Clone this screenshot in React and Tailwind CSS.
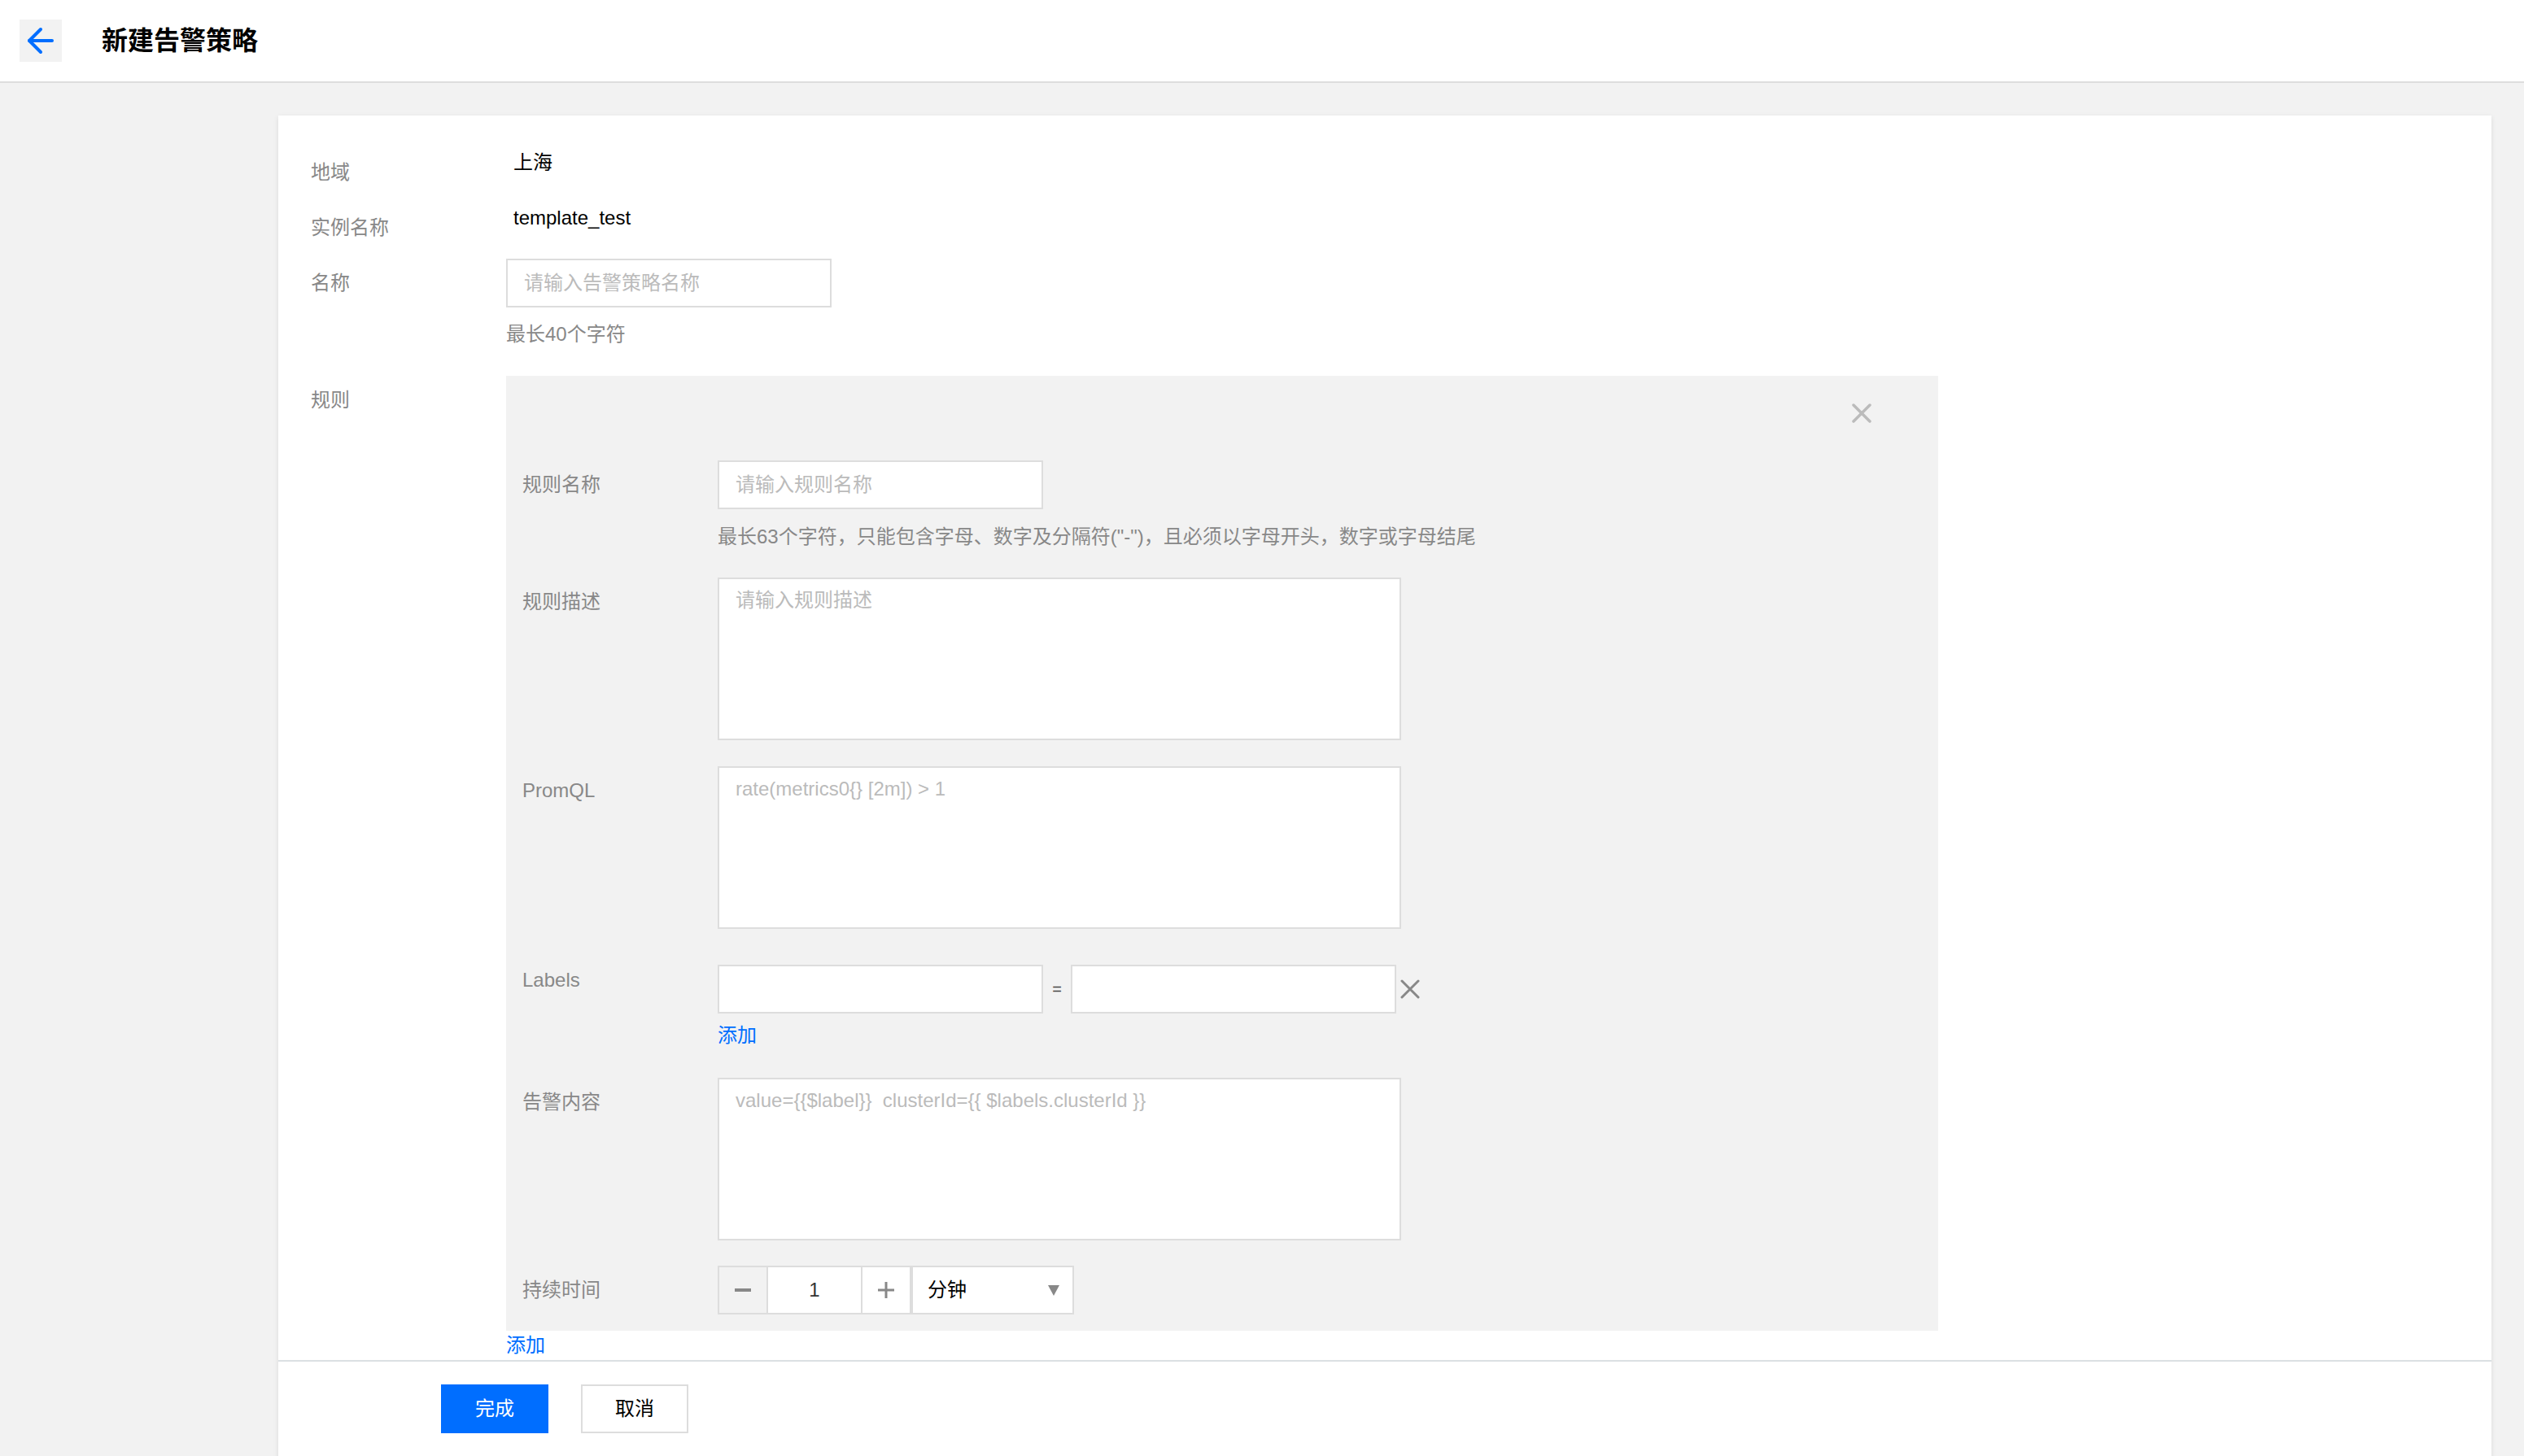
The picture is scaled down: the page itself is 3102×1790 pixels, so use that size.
import { ArrowLeft } from "lucide-react";

function CloseIcon({ className, width = "3" }) {
  return (
    <svg viewBox="0 0 24 24" className={className} fill="none" stroke="currentColor" strokeWidth={width} strokeLinecap="round">
      <path d="M2 2 22 22M22 2 2 22" />
    </svg>
  );
}

function Row({ label, labelClass = "pt-[18px]", children }) {
  return (
    <div className="flex">
      <div className={`w-[240px] shrink-0 leading-[24px] text-[#888] ${labelClass}`}>{label}</div>
      <div className="flex-1">{children}</div>
    </div>
  );
}

function TextArea({ placeholder }) {
  return (
    <textarea
      className="block w-[840px] h-[200px] resize-none border-2 border-[#ddd] bg-white px-[20px] pt-[8px] leading-[36px] text-[24px] outline-none placeholder:text-[#bbb]"
      placeholder={placeholder}
    />
  );
}

function App() {
  return (
    <div className="min-h-screen bg-[#f2f2f2] font-['Liberation_Sans','Noto_Sans_CJK_SC',sans-serif] text-[24px] text-black">
      {/* top bar */}
      <div className="flex h-[102px] items-center border-b-2 border-[#ddd] bg-white pl-[24px]">
        <div className="flex h-[52px] w-[52px] items-center justify-center bg-[#f2f2f2]">
          <ArrowLeft size={48} strokeWidth={2} color="#006eff" />
        </div>
        <span className="ml-[49px] text-[32px] font-bold">新建告警策略</span>
      </div>

      <div className="ml-[342px] mr-[40px] mt-[40px] bg-white shadow-[0_2px_6px_rgba(0,0,0,0.1)]">
        <div className="flex flex-col pl-[40px] pt-[40px]">
          <Row label="地域">
            <div className="h-[60px] pl-[9px] leading-[36px]">上海</div>
          </Row>
          <div className="mt-[8px]">
            <Row label="实例名称">
              <div className="h-[60px] pl-[9px] leading-[36px]">template_test</div>
            </Row>
          </div>
          <div className="mt-[8px]">
            <Row label="名称">
              <input
                className="block h-[60px] w-[400px] border-2 border-[#ddd] px-[20px] outline-none placeholder:text-[#bbb]"
                placeholder="请输入告警策略名称"
              />
              <div className="mt-[15px] leading-[36px] text-[#888]">最长40个字符</div>
            </Row>
          </div>
          <div className="mt-[33px]">
            <Row label="规则">
              <div className="w-[1760px] bg-[#f2f2f2] pb-[20px] pl-[20px]">
                <div className="flex h-[104px] justify-end pr-[82px] pt-[34px]">
                  <CloseIcon className="h-[24px] w-[24px] text-[#bbb]" width="3.5" />
                </div>

                <Row label="规则名称">
                  <input
                    className="block h-[60px] w-[400px] border-2 border-[#ddd] bg-white px-[20px] outline-none placeholder:text-[#bbb]"
                    placeholder="请输入规则名称"
                  />
                  <div className="mt-[16px] leading-[36px] text-[#888]">
                    最长63个字符，只能包含字母、数字及分隔符("-")，且必须以字母开头，数字或字母结尾
                  </div>
                </Row>

                <div className="mt-[32px]">
                  <Row label="规则描述">
                    <TextArea placeholder="请输入规则描述" />
                  </Row>
                </div>

                <div className="mt-[32px]">
                  <Row label="PromQL">
                    <TextArea placeholder="rate(metrics0{} [2m]) > 1" />
                  </Row>
                </div>

                <div className="mt-[44px]">
                  <Row label="Labels" labelClass="pt-[7px]">
                    <div className="flex items-center">
                      <input className="block h-[60px] w-[400px] border-2 border-[#ddd] bg-white px-[20px] outline-none" />
                      <span className="w-[34px] text-center text-[20px] text-[#444]">=</span>
                      <input className="block h-[60px] w-[400px] border-2 border-[#ddd] bg-white px-[20px] outline-none" />
                      <CloseIcon className="ml-[5px] h-[24px] w-[24px] text-[#888]" />
                    </div>
                    <div className="mt-[9px] leading-[36px] text-[#006eff]">添加</div>
                  </Row>
                </div>

                <div className="mt-[34px]">
                  <Row label="告警内容">
                    <TextArea placeholder="value={{$label}}  clusterId={{ $labels.clusterId }}" />
                  </Row>
                </div>

                <div className="mt-[31px]">
                  <Row label="持续时间">
                    <div className="flex h-[60px]">
                      <div className="flex border-2 border-[#ddd]">
                        <div className="flex w-[58px] items-center justify-center bg-[#f2f2f2]">
                          <div className="h-[4px] w-[20px] bg-[#888]" />
                        </div>
                        <input
                          className="w-[118px] border-x-2 border-[#ddd] bg-white text-center text-[#333] outline-none"
                          defaultValue="1"
                        />
                        <div className="flex w-[58px] items-center justify-center bg-white">
                          <svg viewBox="0 0 20 20" className="h-[20px] w-[20px]" stroke="#888" strokeWidth="3">
                            <path d="M10 0v20M0 10h20" />
                          </svg>
                        </div>
                      </div>
                      <div className="flex w-[200px] items-center justify-between border-2 border-[#ddd] bg-white pl-[18px] pr-[16px]">
                        <span>分钟</span>
                        <svg viewBox="0 0 14 14" className="h-[14px] w-[14px]" fill="#888">
                          <polygon points="0,1 14,1 7,14" />
                        </svg>
                      </div>
                    </div>
                  </Row>
                </div>
              </div>
              <div className="leading-[36px] text-[#006eff]">添加</div>
            </Row>
          </div>
        </div>

        <div className="flex gap-[40px] border-t-2 border-[#dbe0e3] pb-[40px] pl-[200px] pt-[28px]">
          <button className="h-[60px] w-[132px] bg-[#006eff] text-white">完成</button>
          <button className="h-[60px] w-[132px] border-2 border-[#ddd] bg-white text-black">取消</button>
        </div>
      </div>
    </div>
  );
}

export default App;
